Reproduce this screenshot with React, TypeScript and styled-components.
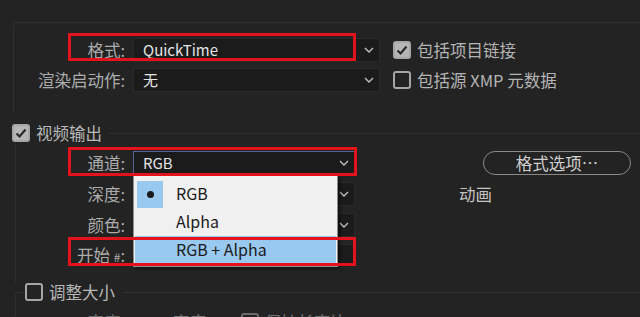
import React from 'react';
import styled, { createGlobalStyle } from 'styled-components';

const GlobalStyle = createGlobalStyle`
  html, body {
    margin: 0;
    padding: 0;
    background: #232323;
  }
  body {
    font-family: "Noto Sans CJK SC", "Noto Sans", sans-serif;
  }
`;

const Page = styled.div`
  position: relative;
  width: 640px;
  height: 317px;
  overflow: hidden;
  background: #232323;
  color: #b0b0b0;
  font-size: 16.5px;
  line-height: 20px;
`;

const TopSpace = styled.div`
  height: 22px;
`;

const Group = styled.fieldset<{ $left: number; $top?: number; $pad: string }>`
  margin: ${(p) => p.$top ?? 0}px 0 0 ${(p) => p.$left}px;
  padding: ${(p) => p.$pad};
  min-width: 0;
  border: 1px solid #303030;
  border-right: none;
  border-bottom: none;
  border-radius: 4px 0 0 0;
`;

const Legend = styled.legend<{ $shift: number }>`
  margin-left: ${(p) => p.$shift}px;
  padding: 0 7px 0 0;
  height: 20px;
  display: flex;
  align-items: center;
  gap: 6px;
  color: #b8b8b8;
`;

const Rows = styled.div<{ $gap: number }>`
  display: flex;
  flex-direction: column;
  gap: ${(p) => p.$gap}px;
`;

const Row = styled.div<{ $dim?: boolean }>`
  display: flex;
  align-items: center;
  height: 24px;
  opacity: ${(p) => (p.$dim ? 0.55 : 1)};
`;

const Label = styled.label<{ $w: number }>`
  flex: none;
  width: ${(p) => p.$w}px;
  margin-right: 8px;
  text-align: right;
  white-space: nowrap;
  color: #acacac;
`;

const Small = styled.span`
  font-size: 12px;
`;

const SelectBox = styled.div<{ $w: number; $focus?: boolean }>`
  position: relative;
  flex: none;
  box-sizing: border-box;
  width: ${(p) => p.$w}px;
  height: 24px;
  display: flex;
  align-items: center;
  padding-left: 9px;
  background: #1b1b1b;
  border: 1px solid ${(p) => (p.$focus ? '#56649a' : '#2a2a2a')};
  color: #e4e4e4;
`;

const Value = styled.span`
  flex: 1;
  white-space: nowrap;
  font-size: 15px;
`;

const Chevron = styled.svg`
  flex: none;
  margin-right: 5px;
`;

const CheckItem = styled.div<{ $ml: number }>`
  display: flex;
  align-items: center;
  gap: 6px;
  margin-left: ${(p) => p.$ml}px;
  color: #b4b4b4;
  white-space: nowrap;
`;

const PillButton = styled.button`
  margin-left: auto;
  margin-right: 9px;
  width: 148px;
  height: 24px;
  border: 1.5px solid #8a8a8a;
  border-radius: 12px;
  background: transparent;
  color: #cfcfcf;
  font: inherit;
  padding: 0;
`;

const SideText = styled.span<{ $ml: number }>`
  margin-left: ${(p) => p.$ml}px;
  color: #c4c4c4;
`;

const Menu = styled.div`
  position: absolute;
  top: calc(100% + 1px);
  left: -1px;
  width: 205px;
  box-sizing: border-box;
  padding: 4px 1px 2px;
  background: #f0f0f0;
  border: 1px solid #8d8d8d;
  box-shadow: 2px 2px 3px rgba(0, 0, 0, 0.55);
  font-size: 16px;
  z-index: 2;
`;

const MenuItem = styled.div<{ $hot?: boolean }>`
  height: 28px;
  box-sizing: border-box;
  padding: 0 0 2px 2px;
  display: flex;
  align-items: center;
  background: ${(p) => (p.$hot ? '#99c9ef' : 'transparent')};
  color: #1a1a1a;
`;

const Mark = styled.span<{ $on?: boolean }>`
  flex: none;
  width: 26px;
  height: 27px;
  margin-bottom: -2px;
  display: flex;
  align-items: center;
  justify-content: center;
  background: ${(p) => (p.$on ? '#99c9ef' : 'transparent')};
  margin-right: 13px;
  &::after {
    content: '';
    width: 7px;
    height: 7px;
    border-radius: 50%;
    background: ${(p) => (p.$on ? '#1a1a1a' : 'transparent')};
  }
`;

const Annotation = styled.div`
  position: absolute;
  box-sizing: border-box;
  border: 3px solid #e3121b;
  z-index: 3;
  pointer-events: none;
`;

const Box = styled.span<{ $on?: boolean }>`
  flex: none;
  box-sizing: border-box;
  width: 18px;
  height: 18px;
  border-radius: 3px;
  border: 2px solid #a6a6a6;
  background: ${(p) => (p.$on ? '#b6b6b6' : 'transparent')};
  display: flex;
  align-items: center;
  justify-content: center;
`;

const Check = ({ on }: { on?: boolean }) => (
  <Box $on={on}>
    {on && (
      <svg width="14" height="14" viewBox="0 0 14 14">
        <path d="M2.5 7.5 L5.6 10.5 L11.5 3.5" fill="none" stroke="#2a2a2a" strokeWidth="2.2" />
      </svg>
    )}
  </Box>
);

const Select = ({
  w,
  value,
  focus,
  children,
}: {
  w: number;
  value?: string;
  focus?: boolean;
  children?: React.ReactNode;
}) => (
  <SelectBox $w={w} $focus={focus}>
    <Value>{value}</Value>
    <Chevron width="10" height="6" viewBox="0 0 10 6">
      <path d="M1 1 L5 5 L9 1" fill="none" stroke="#c0c0c0" strokeWidth="1.4" />
    </Chevron>
    {children}
  </SelectBox>
);

export default function App() {
  return (
    <Page>
      <GlobalStyle />
      <TopSpace />

      <Group $left={13} $pad="15px 0 20px 0">
        <Rows $gap={6}>
          <Row>
            <Label $w={111}>格式:</Label>
            <Select w={247} value="QuickTime" />
            <CheckItem $ml={13}>
              <Check on />
              包括项目链接
            </CheckItem>
          </Row>
          <Row>
            <Label $w={111}>渲染启动作:</Label>
            <Select w={247} value="无" />
            <CheckItem $ml={13}>
              <Check />
              包括源 XMP 元数据
            </CheckItem>
          </Row>
        </Rows>
      </Group>

      <Group $left={15} $top={11} $pad="8px 0 14px 0">
        <Legend $shift={-4}>
          <Check on />
          视频输出
        </Legend>
        <Rows $gap={7}>
          <Row>
            <Label $w={109}>通道:</Label>
            <Select w={222} value="RGB" focus>
              <Menu>
                <MenuItem>
                  <Mark $on />
                  RGB
                </MenuItem>
                <MenuItem>
                  <Mark />
                  Alpha
                </MenuItem>
                <MenuItem $hot>
                  <Mark />
                  RGB + Alpha
                </MenuItem>
              </Menu>
            </Select>
            <PillButton>格式选项…</PillButton>
          </Row>
          <Row>
            <Label $w={109}>深度:</Label>
            <Select w={222} value="8 bpc" />
            <SideText $ml={104}>动画</SideText>
          </Row>
          <Row>
            <Label $w={109}>颜色:</Label>
            <Select w={222} value="直通(无遮罩)" />
          </Row>
          <Row>
            <Label $w={109}>
              开始 <Small>#</Small>:
            </Label>
            <SelectBox $w={222}>
              <Value>000000</Value>
            </SelectBox>
          </Row>
        </Rows>
      </Group>

      <Group $left={15} $pad="8px 0 0 0">
        <Legend $shift={9}>
          <Check />
          调整大小
        </Legend>
        <Row $dim>
          <Label $w={109}>宽度:</Label>
          <SideText $ml={40}>高度:</SideText>
          <CheckItem $ml={30}>
            <Check />
            保持长宽比
          </CheckItem>
        </Row>
      </Group>

      <Annotation style={{ left: 68, top: 33, width: 288, height: 28 }} />
      <Annotation style={{ left: 68, top: 147, width: 289, height: 29 }} />
      <Annotation style={{ left: 68, top: 237, width: 288, height: 29 }} />
    </Page>
  );
}
